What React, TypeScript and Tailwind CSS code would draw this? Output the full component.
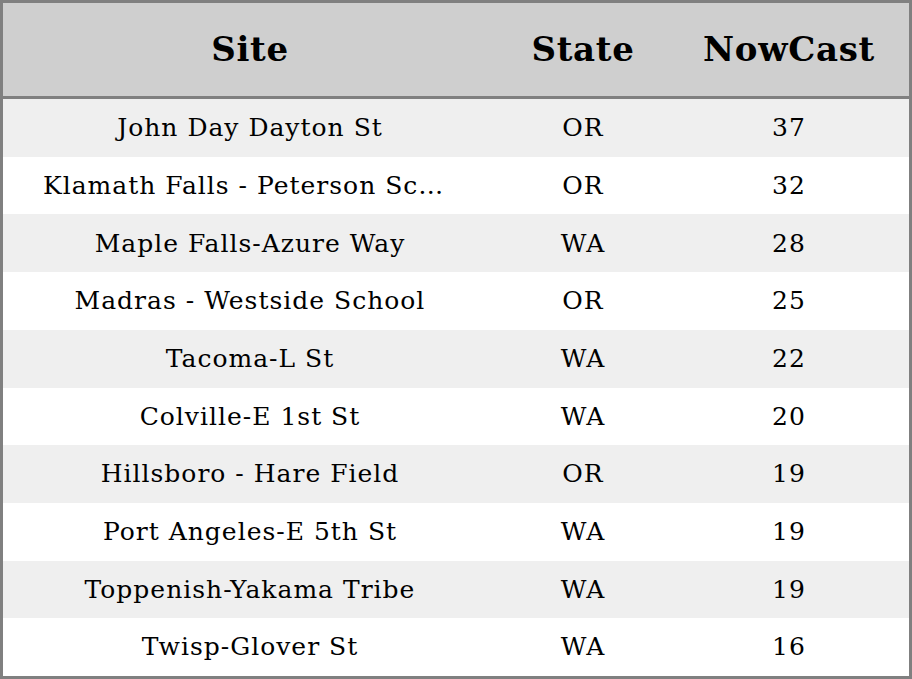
import React from 'react';

interface SiteRow {
  site: string;
  state: string;
  nowcast: number;
}

const rows: SiteRow[] = [
  { site: 'John Day Dayton St', state: 'OR', nowcast: 37 },
  { site: 'Klamath Falls - Peterson School', state: 'OR', nowcast: 32 },
  { site: 'Maple Falls-Azure Way', state: 'WA', nowcast: 28 },
  { site: 'Madras - Westside School', state: 'OR', nowcast: 25 },
  { site: 'Tacoma-L St', state: 'WA', nowcast: 22 },
  { site: 'Colville-E 1st St', state: 'WA', nowcast: 20 },
  { site: 'Hillsboro - Hare Field', state: 'OR', nowcast: 19 },
  { site: 'Port Angeles-E 5th St', state: 'WA', nowcast: 19 },
  { site: 'Toppenish-Yakama Tribe', state: 'WA', nowcast: 19 },
  { site: 'Twisp-Glover St', state: 'WA', nowcast: 16 },
];

const App: React.FC = () => {
  return (
    <div className="w-[912px] h-[679px] bg-white" style={{ fontFamily: '"DejaVu Serif", serif' }}>
      <div className="w-full h-full border-[3px] border-[#808080] flex flex-col text-black">
        {/* Header */}
        <div className="grid grid-cols-[494px_172px_240px] h-[96px] bg-[#cfcfcf] border-b-[3px] border-[#808080] items-center text-[34px] tracking-[0.7px] font-bold">
          <div className="text-center">Site</div>
          <div className="text-center">State</div>
          <div className="text-center">NowCast</div>
        </div>

        {/* Rows */}
        <div className="flex-1 flex flex-col">
          {rows.map((row, index) => (
            <div
              key={row.site}
              className={`flex-1 grid grid-cols-[494px_172px_240px] items-center text-[25px] tracking-[1px] ${
                index % 2 === 0 ? 'bg-[#efefef]' : 'bg-white'
              }`}
            >
              <div className="px-[40px] text-center truncate">{row.site}</div>
              <div className="text-center">{row.state}</div>
              <div className="text-center">{row.nowcast}</div>
            </div>
          ))}
        </div>
      </div>
    </div>
  );
};

export default App;
